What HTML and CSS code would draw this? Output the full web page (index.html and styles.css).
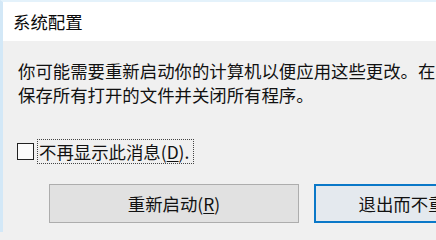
FILE: index.html
```html
<!DOCTYPE html>
<html lang="zh-CN">
<head>
<meta charset="utf-8">
<title>系统配置</title>
<link rel="stylesheet" href="styles.css">
</head>
<body>
<div class="window">
  <div class="titlebar">系统配置</div>
  <div class="content">
    <div class="message">
      <div class="line">你可能需要重新启动你的计算机以便应用这些更改。在重新启动之前，</div>
      <div class="line">保存所有打开的文件并关闭所有程序。</div>
    </div>
    <div class="check-row">
      <span class="checkbox"></span>
      <span class="check-label">不再显示此消息(<u>D</u>).</span>
    </div>
    <div class="buttons">
      <div class="btn">重新启动(<u>R</u>)</div>
      <div class="btn btn-default">退出而不重新启动(<u>X</u>)</div>
    </div>
  </div>
</div>
</body>
</html>
```

FILE: styles.css
```css
html, body {
  margin: 0;
  padding: 0;
  width: 436px;
  height: 232px;
  overflow: hidden;
  background: #f0f0f0;
}

.window {
  width: 436px;
  height: 232px;
  box-sizing: border-box;
  border-left: 3px solid #d3e8f7;
  border-top: 2px solid #e4f2fb;
  font-family: "Noto Sans CJK SC", "Noto Sans", sans-serif;
  font-size: 17.4px;
  color: #111;
  overflow: hidden;
}

.titlebar {
  height: 39px;
  line-height: 40px;
  background: #ffffff;
  padding-left: 10px;
  color: #0a0a0a;
  white-space: nowrap;
}

.content {
  background: #f0f0f0;
  height: 191px;
  padding-top: 18px;
  box-sizing: border-box;
}

.message {
  padding-left: 15px;
}

.line {
  line-height: 24px;
  height: 24px;
  white-space: nowrap;
}

.check-row {
  display: flex;
  align-items: center;
  margin-top: 32px;
  padding-left: 14px;
  height: 25px;
}

.checkbox {
  width: 17px;
  height: 17px;
  box-sizing: border-box;
  border: 1px solid #222;
  background: #fbfbfb;
  flex: none;
}

.check-label {
  margin-left: 3px;
  height: 25px;
  line-height: 24px;
  box-sizing: border-box;
  border: 1px dotted #444;
  padding: 0 4px 0 1px;
  white-space: nowrap;
}

u {
  text-decoration: underline;
  text-underline-offset: 2px;
}

.buttons {
  display: flex;
  gap: 15px;
  margin-top: 20px;
  padding-left: 46px;
}

.btn {
  flex: none;
  width: 250px;
  height: 39px;
  box-sizing: border-box;
  border: 1px solid #adadad;
  background: #e1e1e1;
  display: flex;
  align-items: center;
  justify-content: center;
  white-space: nowrap;
  color: #111;
}

.btn-default {
  border: 2px solid #0a78c8;
  background: #e4e9ee;
}
```
